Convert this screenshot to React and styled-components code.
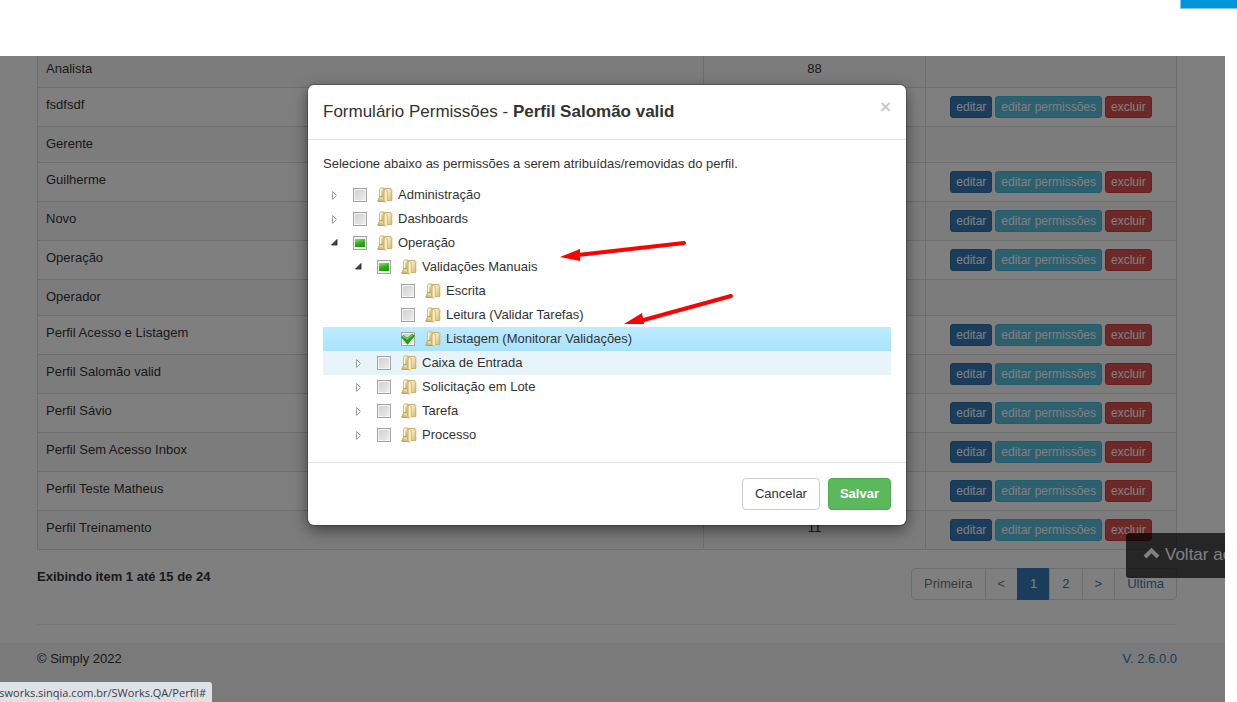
import React, { useState } from "react";
import styled, { createGlobalStyle, css } from "styled-components";

const GlobalStyle = createGlobalStyle`
  * {
    box-sizing: border-box;
  }
  body {
    margin: 0;
    background: #fff;
    color: #333;
    font-family: "Liberation Sans", Arial, sans-serif;
    font-size: 13px;
    line-height: 19px;
  }
  button, input {
    font-family: inherit;
  }
`;

const Page = styled.div`
  display: flex;
  flex-direction: column;
  height: 100vh;
  overflow: hidden;
`;

const TopBar = styled.header`
  display: flex;
  justify-content: flex-end;
  flex: 0 0 56px;
`;

const TopAccent = styled.div`
  width: 57px;
  height: 9px;
  background: #0095d9;
  border: 1px solid #7fcaec;
  border-width: 0 0 1px 1px;
`;

const Screen = styled.div`
  position: relative;
  flex: 1;
  display: flex;
  flex-direction: column;
  min-height: 0;
  margin-right: 12px;
  overflow: hidden;
  background: #fff;
`;

const Content = styled.main`
  padding: 0 48px 0 37px;
`;

const Table = styled.table`
  width: 100%;
  margin-top: -5px;
  table-layout: fixed;
  border-collapse: collapse;
`;

const Row = styled.tr`
  &:nth-child(odd) {
    background: #f9f9f9;
  }
`;

const Cell = styled.td`
  width: ${(props) => props.$width || "auto"};
  padding: ${(props) => (props.$actions ? "8px" : "7px 8px 9px")};
  border: 1px solid #ddd;
  text-align: ${(props) => props.$align || "left"};
  vertical-align: top;
`;

const Actions = styled.div`
  display: flex;
  justify-content: center;
  gap: 3px;
`;

const tones = {
  primary: ["#337ab7", "#2e6da4"],
  info: ["#5bc0de", "#46b8da"],
  danger: ["#d9534f", "#d43f3a"],
};

const SmallButton = styled.button`
  height: 22px;
  padding: 0 5px;
  border: 1px solid ${(props) => tones[props.$tone][1]};
  border-radius: 3px;
  background: ${(props) => tones[props.$tone][0]};
  color: #fff;
  font-size: 12px;
  line-height: 18px;
  white-space: nowrap;
  cursor: pointer;
`;

const TableFooter = styled.div`
  display: flex;
  justify-content: space-between;
  align-items: flex-start;
  padding: 18px 0 24px;
  border-bottom: 1px solid #eee;
`;

const Summary = styled.strong`
  line-height: 17px;
`;

const Pagination = styled.nav`
  display: flex;
`;

const PageLink = styled.a`
  height: 32px;
  margin-left: -1px;
  padding: 6px 12px;
  border: 1px solid ${(props) => (props.$active ? "#337ab7" : "#ddd")};
  background: ${(props) => (props.$active ? "#337ab7" : "#fff")};
  color: ${(props) => (props.$active ? "#fff" : props.$muted ? "#777" : "#337ab7")};
  line-height: 18px;
  text-decoration: none;
  &:first-child {
    border-radius: 4px 0 0 4px;
  }
  &:last-child {
    border-radius: 0 4px 4px 0;
  }
`;

const Footer = styled.footer`
  display: flex;
  flex: 1;
  justify-content: space-between;
  margin-top: 18px;
  padding: 6px 48px 0 37px;
  background: #f5f5f5;
`;

const Version = styled.a`
  color: #337ab7;
  text-decoration: none;
`;

const BackToTop = styled.a`
  position: absolute;
  right: 0;
  bottom: 124px;
  display: flex;
  align-items: center;
  gap: 5px;
  width: 99px;
  height: 45px;
  padding: 0 0 3px 17px;
  overflow: hidden;
  border-radius: 3px 0 0 3px;
  background: rgba(0, 0, 0, 0.7);
  color: #fff;
  font-size: 17px;
  text-decoration: none;
  white-space: nowrap;
  svg {
    flex: none;
  }
`;

const Backdrop = styled.div`
  position: absolute;
  inset: 0;
  display: flex;
  justify-content: center;
  align-items: flex-start;
  padding: 29px 11px 0 0;
  background: rgba(0, 0, 0, 0.5);
`;

const Dialog = styled.section`
  width: 598px;
  max-width: 100%;
  border-radius: 6px;
  background: #fff;
  box-shadow: 0 0 0 1px rgba(0, 0, 0, 0.2), 0 5px 15px rgba(0, 0, 0, 0.5);
`;

const DialogHeader = styled.div`
  display: flex;
  justify-content: space-between;
  align-items: flex-start;
  padding: 15px;
  border-bottom: 1px solid #e5e5e5;
`;

const DialogTitle = styled.h4`
  margin: 0;
  font-size: 17px;
  font-weight: 400;
  line-height: 24px;
`;

const CloseButton = styled.button`
  padding: 0;
  border: 0;
  background: none;
  color: #000;
  font-size: 19px;
  font-weight: 700;
  line-height: 14px;
  opacity: 0.2;
  cursor: pointer;
`;

const DialogBody = styled.div`
  padding: 14px 15px 15px;
`;

const Hint = styled.p`
  margin: 0 0 10px;
`;

const Tree = styled.ul`
  margin: 0;
  padding: 0;
  list-style: none;
`;

const TreeRow = styled.li`
  display: flex;
  align-items: center;
  height: 24px;
  padding-left: ${(props) => props.$level * 24}px;
  ${(props) =>
    props.$state === "selected" &&
    css`
      background: linear-gradient(to bottom, #beebff, #a8e4ff);
    `}
  ${(props) =>
    props.$state === "hovered" &&
    css`
      background: #e7f4f9;
    `}
`;

const Toggle = styled.button`
  display: grid;
  place-items: center;
  width: 24px;
  height: 24px;
  padding: 0;
  border: 0;
  background: none;
  visibility: ${(props) => (props.$leaf ? "hidden" : "visible")};
`;

const NodeLabel = styled.label`
  display: flex;
  align-items: center;
  padding-left: 6px;
`;

const CheckHolder = styled.span`
  position: relative;
  display: grid;
  margin-right: 10px;
  svg {
    position: absolute;
    inset: 0;
    pointer-events: none;
  }
`;

const Check = styled.input`
  appearance: none;
  width: 14px;
  height: 14px;
  margin: 0;
  border: 1px solid #a3a3a3;
  background: linear-gradient(135deg, #d0d0d0, #ededed);
  box-shadow: inset 0 0 0 1px #f4f4f4;
  &:indeterminate {
    padding: 2px 1px;
    background: linear-gradient(165deg, #8fe07c, #2fae18 50%, #159a00) content-box, #f1f1f1;
    box-shadow: none;
  }
`;

const NodeText = styled.span`
  padding: 0 0 2px 5px;
  white-space: nowrap;
`;

const DialogFooter = styled.div`
  display: flex;
  justify-content: flex-end;
  gap: 8px;
  padding: 15px;
  border-top: 1px solid #e5e5e5;
`;

const DialogButton = styled.button`
  height: 32px;
  padding: 0 ${(props) => (props.$success ? 11 : 12)}px 2px;
  border: 1px solid ${(props) => (props.$success ? "#4cae4c" : "#ccc")};
  border-radius: 4px;
  background: ${(props) => (props.$success ? "#5cb85c" : "#fff")};
  color: ${(props) => (props.$success ? "#fff" : "#333")};
  font-size: 13px;
  font-weight: ${(props) => (props.$success ? 700 : 400)};
  cursor: pointer;
`;

const Arrows = styled.svg`
  position: absolute;
  top: 150px;
  left: 252px;
  pointer-events: none;
`;

const DialogArea = styled.div`
  position: relative;
  max-width: 100%;
`;

const StatusBar = styled.div`
  position: absolute;
  bottom: 0;
  left: 0;
  display: flex;
  justify-content: flex-end;
  width: 212px;
  height: 20px;
  padding-right: 6px;
  overflow: hidden;
  border-radius: 0 3px 0 0;
  background: #dee1e6;
  color: #3c4043;
  font-family: "Open Sans", "Noto Sans", sans-serif;
  font-size: 11px;
  line-height: 21px;
  white-space: nowrap;
`;

const profiles = [
  { name: "Analista", count: "88" },
  { name: "fsdfsdf", editable: true },
  { name: "Gerente" },
  { name: "Guilherme", editable: true },
  { name: "Novo", editable: true },
  { name: "Operação", editable: true },
  { name: "Operador" },
  { name: "Perfil Acesso e Listagem", editable: true },
  { name: "Perfil Salomão valid", editable: true },
  { name: "Perfil Sávio", editable: true },
  { name: "Perfil Sem Acesso Inbox", editable: true },
  { name: "Perfil Teste Matheus", editable: true },
  { name: "Perfil Treinamento", count: "11", editable: true },
];

const permissions = [
  { name: "Administração", level: 0, toggle: "closed" },
  { name: "Dashboards", level: 0, toggle: "closed" },
  { name: "Operação", level: 0, toggle: "open", check: "mixed" },
  { name: "Validações Manuais", level: 1, toggle: "open", check: "mixed" },
  { name: "Escrita", level: 2 },
  { name: "Leitura (Validar Tarefas)", level: 2 },
  { name: "Listagem (Monitorar Validações)", level: 2, check: "on", state: "selected" },
  { name: "Caixa de Entrada", level: 1, toggle: "closed", state: "hovered" },
  { name: "Solicitação em Lote", level: 1, toggle: "closed" },
  { name: "Tarefa", level: 1, toggle: "closed" },
  { name: "Processo", level: 1, toggle: "closed" },
];

const ToggleIcon = ({ open }) => (
  <svg width="10" height="10" viewBox="0 0 10 10">
    {open ? (
      <path d="M7 1.500v5.500H1.500z" fill="#444" stroke="#222" strokeWidth="0.8" />
    ) : (
      <path d="M2.500 1.500v8l4-4z" fill="#fff" stroke="#a5a5a5" />
    )}
  </svg>
);

const FolderIcon = () => (
  <svg width="16" height="16" viewBox="0 0 16 16">
    <defs>
      <linearGradient id="folder-back" x1="0" y1="0" x2="0" y2="1">
        <stop offset="0" stopColor="#f7ecc6" />
        <stop offset="1" stopColor="#d3b260" />
      </linearGradient>
      <linearGradient id="folder-front" x1="0" y1="0" x2="1" y2="1">
        <stop offset="0" stopColor="#fdf6dc" />
        <stop offset="0.5" stopColor="#efdca6" />
        <stop offset="1" stopColor="#d6b766" />
      </linearGradient>
    </defs>
    <path d="M0 13.500l2-2.500v4H0.500z" fill="#b9bec4" opacity="0.8" />
    <path d="M2.500 1.500L3.500 0.800h3.500v9H2.500z" fill="url(#folder-back)" stroke="#cfb67c" strokeWidth="0.800" />
    <path d="M2.500 9.500l4 0.500 1 4.500H1.500z" fill="url(#folder-back)" stroke="#b8954a" strokeWidth="0.800" />
    <path d="M3.500 2v7" stroke="#fffbe9" />
    <path d="M6.500 1.500h2v13h-1l-1-4z" fill="#e6cf92" stroke="#c9ab63" strokeWidth="0.600" />
    <path d="M8 1.500h6l0.800 0.800v11.200H9z" fill="url(#folder-front)" stroke="#c2a15a" strokeWidth="0.800" />
    <path d="M7.500 2l3 1.500v10l-1.500 1.500h-1.500z" fill="#f3e3b4" stroke="#cdb06a" strokeWidth="0.600" />
    <path d="M8.300 3.500v10" stroke="#fffbe9" />
  </svg>
);

const CheckIcon = () => (
  <svg width="14" height="14" viewBox="0 0 14 14">
    <path d="M0 5l2.500-2L6 5.800 11.500 1.800 14 3.800 6.500 12.800z" fill="#259c16" />
    <path d="M1.500 5L2.600 4.200 6 7 11.500 3" stroke="#74cf61" strokeWidth="1.200" fill="none" />
  </svg>
);

const TreeNode = ({ node }) => {
  const [checked, setChecked] = useState(node.check === "on");
  const setMixed = (el) => {
    if (el) el.indeterminate = node.check === "mixed";
  };

  return (
    <TreeRow $level={node.level} $state={node.state}>
      <Toggle $leaf={!node.toggle} type="button" aria-label={node.name}>
        <ToggleIcon open={node.toggle === "open"} />
      </Toggle>
      <NodeLabel>
        <CheckHolder>
          <Check
            ref={setMixed}
            type="checkbox"
            checked={checked}
            onChange={(e) => setChecked(e.target.checked)}
          />
          {checked && <CheckIcon />}
        </CheckHolder>
        <FolderIcon />
        <NodeText>{node.name}</NodeText>
      </NodeLabel>
    </TreeRow>
  );
};

const ProfileTable = () => (
  <Table>
    <tbody>
      {profiles.map((profile) => (
        <Row key={profile.name}>
          <Cell>{profile.name}</Cell>
          <Cell $width="222px" $align="center">
            {profile.count}
          </Cell>
          <Cell $width="251px" $actions>
            {profile.editable ? (
              <Actions>
                <SmallButton $tone="primary">editar</SmallButton>
                <SmallButton $tone="info">editar permissões</SmallButton>
                <SmallButton $tone="danger">excluir</SmallButton>
              </Actions>
            ) : null}
          </Cell>
        </Row>
      ))}
    </tbody>
  </Table>
);

const PermissionsDialog = () => (
  <DialogArea>
    <Dialog role="dialog" aria-labelledby="dialog-title">
      <DialogHeader>
        <DialogTitle id="dialog-title">
          Formulário Permissões - <strong>Perfil Salomão valid</strong>
        </DialogTitle>
        <CloseButton type="button" aria-label="Fechar">
          ×
        </CloseButton>
      </DialogHeader>
      <DialogBody>
        <Hint>Selecione abaixo as permissões a serem atribuídas/removidas do perfil.</Hint>
        <Tree>
          {permissions.map((node) => (
            <TreeNode key={node.name} node={node} />
          ))}
        </Tree>
      </DialogBody>
      <DialogFooter>
        <DialogButton type="button">Cancelar</DialogButton>
        <DialogButton type="button" $success>
          Salvar
        </DialogButton>
      </DialogFooter>
    </Dialog>
    <Arrows width="176" height="94" viewBox="0 0 176 94">
      <g stroke="#f00" strokeWidth="4" strokeLinecap="round">
        <path d="M124 8L18 20" />
        <path d="M171 61L80 86" />
      </g>
      <g fill="#f00">
        <path d="M0 22L20 14L20 26z" />
        <path d="M64 89L82 78L84 89z" />
      </g>
    </Arrows>
  </DialogArea>
);

const App = () => (
  <>
    <GlobalStyle />
    <Page>
      <TopBar>
        <TopAccent />
      </TopBar>
      <Screen>
        <Content>
          <ProfileTable />
          <TableFooter>
            <Summary>Exibindo item 1 até 15 de 24</Summary>
            <Pagination aria-label="Paginação">
              <PageLink href="#" $muted>Primeira</PageLink>
              <PageLink href="#" $muted>&lt;</PageLink>
              <PageLink href="#" $active>1</PageLink>
              <PageLink href="#">2</PageLink>
              <PageLink href="#">&gt;</PageLink>
              <PageLink href="#">Última</PageLink>
            </Pagination>
          </TableFooter>
        </Content>
        <Footer>
          <span>© Simply 2022</span>
          <Version href="#">V. 2.6.0.0</Version>
        </Footer>
        <BackToTop href="#">
          <svg width="17" height="14" viewBox="0 0 17 14">
            <path d="M2 10l6.500-6.500L15 10" fill="none" stroke="#fff" strokeWidth="4" />
          </svg>
          Voltar ao topo
        </BackToTop>
        <Backdrop>
          <PermissionsDialog />
        </Backdrop>
        <StatusBar>sworks.sinqia.com.br/SWorks.QA/Perfil#</StatusBar>
      </Screen>
    </Page>
  </>
);

export default App;
